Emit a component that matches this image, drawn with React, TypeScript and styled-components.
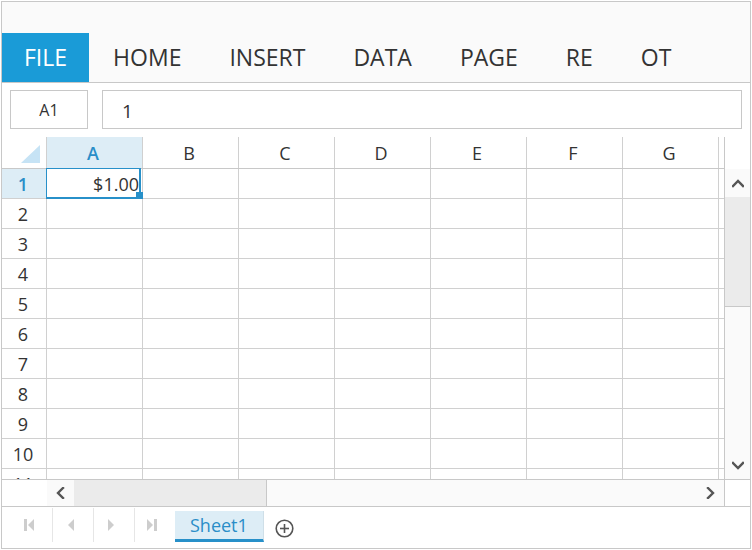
import React from 'react';
import styled, { createGlobalStyle } from 'styled-components';

const Global = createGlobalStyle`
  html, body { margin: 0; padding: 0; background: #fff; }
  body { font-family: "Open Sans", "Noto Sans", sans-serif; }
  * { box-sizing: border-box; }
`;

const Frame = styled.div`
  margin: 1px 0 0 1px;
  width: 750px;
  height: 548px;
  border: 1px solid #c8c8c8;
  display: flex;
  flex-direction: column;
  overflow: hidden;
  background: #fff;
`;

const Ribbon = styled.div`
  height: 81px;
  flex-shrink: 0;
  background: #fafafa;
  border-bottom: 1px solid #c8c8c8;
  display: flex;
  align-items: flex-end;
`;

const RibbonTab = styled.div<{ $active?: boolean }>`
  height: 49px;
  line-height: 49px;
  padding: 0 ${(p) => (p.$active ? 22 : 24)}px;
  font-size: 23px;
  color: ${(p) => (p.$active ? '#fff' : '#333')};
  background: ${(p) => (p.$active ? '#1a9bd7' : 'transparent')};
`;

const FormulaBar = styled.div`
  height: 54px;
  flex-shrink: 0;
  display: flex;
  align-items: flex-start;
  padding: 7px 8px 0 8px;
`;

const NameBox = styled.div`
  width: 78px;
  height: 39px;
  border: 1px solid #c8c8c8;
  display: flex;
  align-items: center;
  justify-content: center;
  font-size: 16px;
  color: #333;
`;

const FormulaInput = styled.div`
  flex: 1;
  margin-left: 14px;
  height: 39px;
  border: 1px solid #c8c8c8;
  padding-left: 19px;
  line-height: 40px;
  font-size: 19px;
  color: #333;
`;

const GridArea = styled.div`
  height: 342px;
  flex-shrink: 0;
  display: grid;
  grid-template-columns: minmax(0, 1fr) 26px;
  grid-template-rows: 32px minmax(0, 1fr);
  overflow: hidden;
`;

const HeaderRow = styled.div`
  display: flex;
  border-bottom: 1px solid #c8c8c8;
  overflow: hidden;
`;

const Corner = styled.div`
  width: 45px;
  flex-shrink: 0;
  border-right: 1px solid #d0d0d0;
  display: flex;
  justify-content: flex-end;
  align-items: flex-end;
  padding: 0 6px 5px 0;
`;

const CornerTriangle = styled.div`
  width: 0;
  height: 0;
  border-left: 19px solid transparent;
  border-bottom: 18px solid #c6e3f5;
`;

const ColHeader = styled.div<{ $sel?: boolean }>`
  width: 96px;
  flex-shrink: 0;
  border-right: 1px solid #d0d0d0;
  background: ${(p) => (p.$sel ? '#ddedf6' : '#fff')};
  color: ${(p) => (p.$sel ? '#2a8ec8' : '#333')};
  font-weight: ${(p) => (p.$sel ? 600 : 400)};
  font-size: 18px;
  padding-right: 3px;
  display: flex;
  align-items: center;
  justify-content: center;
`;

const HeaderFiller = styled.div`
  border-left: 1px solid #c8c8c8;
  background: #fff;
`;

const Body = styled.div`
  display: flex;
  flex-direction: column;
`;

const Row = styled.div`
  display: flex;
  height: 30px;
  flex-shrink: 0;
  border-bottom: 1px solid #d0d0d0;
`;

const RowHeader = styled.div<{ $sel?: boolean }>`
  width: 45px;
  flex-shrink: 0;
  border-right: 1px solid #d0d0d0;
  background: ${(p) => (p.$sel ? '#ddedf6' : '#fff')};
  color: ${(p) => (p.$sel ? '#2a8ec8' : '#333')};
  font-weight: ${(p) => (p.$sel ? 600 : 400)};
  font-size: 18px;
  line-height: 29px;
  padding: 1px 2px 0 0;
  text-align: center;
`;

const Cell = styled.div`
  position: relative;
  width: 96px;
  flex-shrink: 0;
  border-right: 1px solid #d0d0d0;
  font-size: 18px;
  color: #333;
  line-height: 29px;
  padding-top: 1px;
  padding-right: 3px;
  text-align: right;
`;

const Selection = styled.div`
  position: absolute;
  top: -1px;
  left: -1px;
  width: 95px;
  height: 31px;
  border-style: solid;
  border-color: #2790c9;
  border-width: 1px 2px 2px 1px;
`;

const FillHandle = styled.div`
  position: absolute;
  right: -4px;
  bottom: -2px;
  width: 7px;
  height: 7px;
  background: #2790c9;
`;

const VScroll = styled.div`
  border-left: 1px solid #c8c8c8;
  background: #fafafa;
  display: flex;
  flex-direction: column;
`;

const ScrollBtn = styled.div<{ $w?: number; $h?: number }>`
  flex-shrink: 0;
  width: ${(p) => (p.$w ? `${p.$w}px` : 'auto')};
  height: ${(p) => (p.$h ? `${p.$h}px` : 'auto')};
  display: flex;
  align-items: center;
  justify-content: center;
  background: #fafafa;
`;

const VThumb = styled.div`
  height: 110px;
  flex-shrink: 0;
  background: #ebebeb;
  border-bottom: 1px solid #c8c8c8;
`;

const Spacer = styled.div`
  flex: 1;
`;

const HScroll = styled.div`
  height: 28px;
  flex-shrink: 0;
  border-top: 1px solid #c8c8c8;
  border-bottom: 1px solid #c8c8c8;
  display: flex;
`;

const HBlank = styled.div`
  width: 45px;
  flex-shrink: 0;
  background: #fff;
`;

const HThumb = styled.div`
  width: 193px;
  flex-shrink: 0;
  background: #ebebeb;
  border-right: 1px solid #c8c8c8;
`;

const HTrack = styled.div`
  flex: 1;
  background: #fafafa;
`;

const ScrollCorner = styled.div`
  width: 26px;
  flex-shrink: 0;
  border-left: 1px solid #c8c8c8;
  background: #fff;
`;

const TabBar = styled.div`
  flex: 1;
  display: flex;
  align-items: flex-start;
  padding: 1px 0 0 10px;
`;

const NavButton = styled.div<{ $last?: boolean }>`
  width: ${(p) => (p.$last ? 40 : 41)}px;
  height: 34px;
  flex-shrink: 0;
  border-right: ${(p) => (p.$last ? 'none' : '1px solid #e6e6e6')};
  display: flex;
  align-items: center;
  padding-left: 12px;
`;

const SheetTab = styled.div`
  margin-top: 3px;
  height: 31px;
  padding: 0 15px;
  background: #ddedf6;
  border-bottom: 3px solid #2790c9;
  border-right: 1px solid #cfdfe8;
  color: #2a8ec8;
  font-size: 18px;
  line-height: 28px;
`;

const AddButton = styled.div`
  margin: 11px 0 0 11px;
  width: 19px;
  height: 19px;
  display: flex;
`;

const Chevron = ({ dir }: { dir: 'up' | 'down' | 'left' | 'right' }) => {
  const pts: Record<string, string> = {
    up: '1,7 6,2 11,7',
    down: '1,2 6,7 11,2',
    left: '7,1 2,6 7,11',
    right: '2,1 7,6 2,11',
  };
  const vertical = dir === 'up' || dir === 'down';
  return (
    <svg width={vertical ? 12 : 9} height={vertical ? 9 : 12} viewBox={vertical ? '0 0 12 9' : '0 0 9 12'}>
      <polyline points={pts[dir]} fill="none" stroke="#555" strokeWidth="2.4" strokeLinecap="square" strokeLinejoin="miter" />
    </svg>
  );
};

const NavIcon = ({ kind }: { kind: 'first' | 'prev' | 'next' | 'last' }) => {
  const c = '#cdcdcd';
  return (
    <svg width="11" height="12" viewBox="0 0 11 12">
      {kind === 'first' && (
        <>
          <rect x="0" y="0" width="3" height="12" fill={c} />
          <polygon points="10,0 4,6 10,12" fill={c} />
        </>
      )}
      {kind === 'prev' && <polygon points="9,0 3,6 9,12" fill={c} />}
      {kind === 'next' && <polygon points="2,0 8,6 2,12" fill={c} />}
      {kind === 'last' && (
        <>
          <polygon points="0,0 6,6 0,12" fill={c} />
          <rect x="7" y="0" width="3" height="12" fill={c} />
        </>
      )}
    </svg>
  );
};

const PlusCircle = () => (
  <svg width="19" height="19" viewBox="0 0 19 19">
    <circle cx="9.5" cy="9.5" r="8.3" fill="none" stroke="#555" strokeWidth="1.6" />
    <line x1="9.5" y1="5" x2="9.5" y2="14" stroke="#555" strokeWidth="1.6" />
    <line x1="5" y1="9.5" x2="14" y2="9.5" stroke="#555" strokeWidth="1.6" />
  </svg>
);

const tabs = ['FILE', 'HOME', 'INSERT', 'DATA', 'PAGE', 'RE', 'OT'];
const cols = ['A', 'B', 'C', 'D', 'E', 'F', 'G'];
const rows = [1, 2, 3, 4, 5, 6, 7, 8, 9, 10, 11];

export default function App() {
  return (
    <>
      <Global />
      <Frame>
        <Ribbon>
          {tabs.map((t, i) => (
            <RibbonTab key={t} $active={i === 0}>
              {t}
            </RibbonTab>
          ))}
        </Ribbon>
        <FormulaBar>
          <NameBox>A1</NameBox>
          <FormulaInput>1</FormulaInput>
        </FormulaBar>
        <GridArea>
          <HeaderRow>
            <Corner>
              <CornerTriangle />
            </Corner>
            {cols.map((c, i) => (
              <ColHeader key={c} $sel={i === 0}>
                {c}
              </ColHeader>
            ))}
          </HeaderRow>
          <HeaderFiller />
          <Body>
            {rows.map((r) => (
              <Row key={r}>
                <RowHeader $sel={r === 1}>{r}</RowHeader>
                {cols.map((c, ci) => (
                  <Cell key={c}>
                    {r === 1 && ci === 0 && (
                      <>
                        $1.00
                        <Selection>
                          <FillHandle />
                        </Selection>
                      </>
                    )}
                  </Cell>
                ))}
              </Row>
            ))}
          </Body>
          <VScroll>
            <ScrollBtn $h={28}>
              <Chevron dir="up" />
            </ScrollBtn>
            <VThumb />
            <Spacer />
            <ScrollBtn $h={28}>
              <Chevron dir="down" />
            </ScrollBtn>
          </VScroll>
        </GridArea>
        <HScroll>
          <HBlank />
          <ScrollBtn $w={27}>
            <Chevron dir="left" />
          </ScrollBtn>
          <HThumb />
          <HTrack />
          <ScrollBtn $w={27}>
            <Chevron dir="right" />
          </ScrollBtn>
          <ScrollCorner />
        </HScroll>
        <TabBar>
          <NavButton>
            <NavIcon kind="first" />
          </NavButton>
          <NavButton>
            <NavIcon kind="prev" />
          </NavButton>
          <NavButton>
            <NavIcon kind="next" />
          </NavButton>
          <NavButton $last>
            <NavIcon kind="last" />
          </NavButton>
          <SheetTab>Sheet1</SheetTab>
          <AddButton>
            <PlusCircle />
          </AddButton>
        </TabBar>
      </Frame>
    </>
  );
}
